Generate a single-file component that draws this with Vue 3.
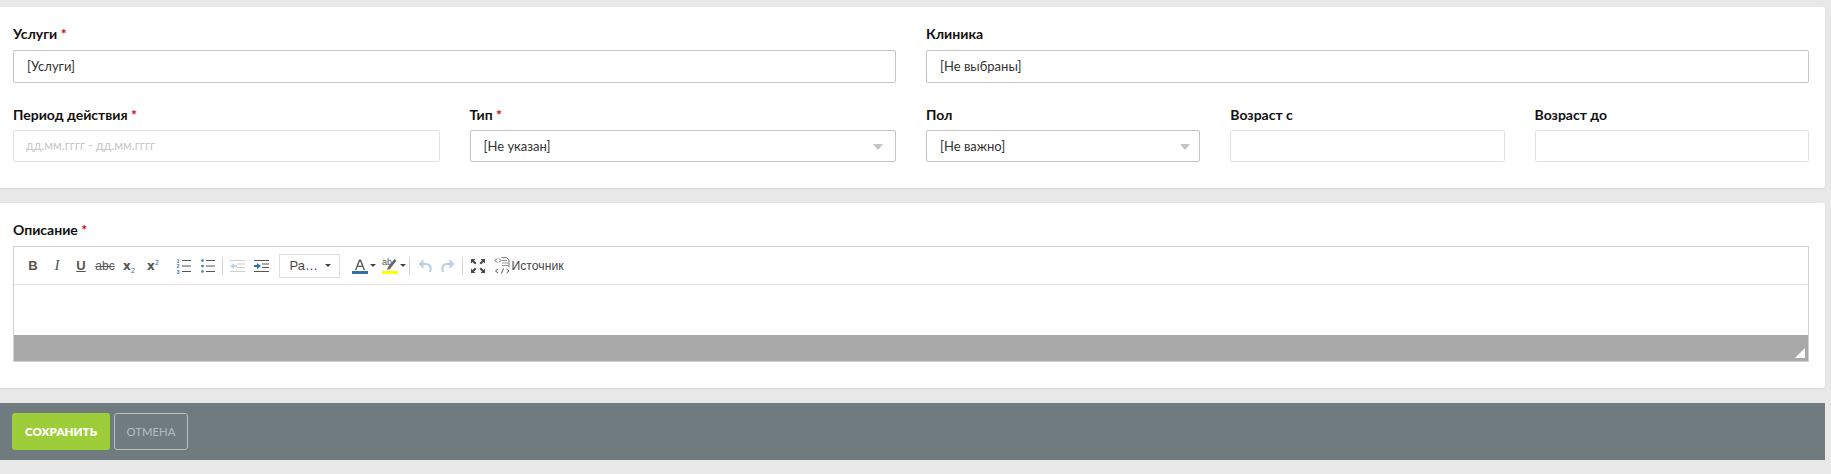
<script setup>
</script>

<template>
  <div class="page">
    <section class="card card-top">
      <div class="row">
        <div class="field half">
          <label class="label">Услуги <i>*</i></label>
          <div class="input strong">[Услуги]</div>
        </div>
        <div class="field half">
          <label class="label">Клиника</label>
          <div class="input strong">[Не выбраны]</div>
        </div>
      </div>
      <div class="row row-2">
        <div class="field quarter">
          <label class="label">Период действия <i>*</i></label>
          <div class="input light placeholder">дд.мм.гггг - дд.мм.гггг</div>
        </div>
        <div class="field quarter">
          <label class="label">Тип <i>*</i></label>
          <div class="input strong select">[Не указан]<span class="caret caret-type"></span></div>
        </div>
        <div class="field sixth">
          <label class="label">Пол</label>
          <div class="input strong select">[Не важно]<span class="caret"></span></div>
        </div>
        <div class="field sixth">
          <label class="label">Возраст с</label>
          <div class="input light"></div>
        </div>
        <div class="field sixth">
          <label class="label">Возраст до</label>
          <div class="input light"></div>
        </div>
      </div>
    </section>

    <section class="card card-editor">
      <label class="label label-editor">Описание <i>*</i></label>
      <div class="editor">
        <div class="toolbar">
          <span class="tb glyph bold"><span>B</span></span>
          <span class="tb glyph ital"><span>I</span></span>
          <span class="tb glyph under"><span>U</span></span>
          <span class="tb glyph strike"><span>abc</span></span>
          <span class="tb glyph bold script"><span>x<sub>2</sub></span></span>
          <span class="tb glyph bold script"><span>x<sup>2</sup></span></span>

          <span class="tb tb-gap">
            <svg width="16" height="16" viewBox="0 0 16 16">
              <g class="num"><text x="0.500" y="4.500">1</text><text x="0.500" y="10">2</text><text x="0.500" y="15.500">3</text></g>
              <g fill="#555"><rect x="6" y="2" width="9" height="1"/><rect x="6" y="7.500" width="9" height="1"/><rect x="6" y="13" width="9" height="1"/></g>
            </svg>
          </span>
          <span class="tb">
            <svg width="16" height="16" viewBox="0 0 16 16">
              <g fill="#3a75ad"><circle cx="2.500" cy="2.500" r="1.300"/><circle cx="2.500" cy="8" r="1.300"/><circle cx="2.500" cy="13.500" r="1.300"/></g>
              <g fill="#555"><rect x="6" y="2" width="9" height="1"/><rect x="6" y="7.500" width="9" height="1"/><rect x="6" y="13" width="9" height="1"/></g>
            </svg>
          </span>
          <span class="sep"></span>
          <span class="tb">
            <svg width="16" height="16" viewBox="0 0 16 16">
              <g fill="#cfcfcf"><rect x="1" y="2" width="15" height="1"/><rect x="8" y="5.500" width="8" height="1"/><rect x="8" y="9" width="8" height="1"/><rect x="1" y="13" width="15" height="1"/></g>
              <path d="M8 7H5V5L1 8l4 3V9h3z" fill="#bcd3e8"/>
            </svg>
          </span>
          <span class="tb">
            <svg width="16" height="16" viewBox="0 0 16 16">
              <g fill="#555"><rect x="1" y="2" width="15" height="1"/><rect x="9" y="5.500" width="7" height="1"/><rect x="9" y="9" width="7" height="1"/><rect x="1" y="13" width="15" height="1"/></g>
              <path d="M1 7h3V5l4 3-4 3V9H1z" fill="#2f6da8"/>
            </svg>
          </span>

          <div class="combo"><span class="combo-text">Ра…</span><span class="mini"></span></div>

          <span class="tb tb-wide">
            <svg width="16" height="16" viewBox="0 0 16 16">
              <path d="M3 12L7 1.500h2L13 12h-1.500l-1-3h-5l-1 3zM6 7.800h4L8 3z" fill="#555"/>
              <rect x="0" y="13" width="16" height="3" fill="#3a6ea5"/>
            </svg>
            <span class="mini"></span>
          </span>
          <span class="tb tb-wide">
            <svg width="16" height="16" viewBox="0 0 16 16">
              <text x="0" y="7" class="ab">ab</text>
              <path d="M5 12l1-3 6.500-8 2 1.600L8 11z" fill="#666"/>
              <rect x="0" y="13" width="16" height="3" fill="#ffff00"/>
            </svg>
            <span class="mini"></span>
          </span>
          <span class="sep sep-2"></span>
          <span class="tb undo undo-first">
            <svg width="16" height="16" viewBox="0 0 16 16">
              <path d="M13 14c1.500-3.500 1-8-4.500-8H5" fill="none" stroke="#bcd0e2" stroke-width="2.200"/>
              <path d="M6.500 1L1.500 6l5 5z" fill="#bcd0e2"/>
            </svg>
          </span>
          <span class="tb undo">
            <svg width="16" height="16" viewBox="0 0 16 16">
              <path d="M3 14c-1.500-3.500-1-8 4.500-8H11" fill="none" stroke="#bcd0e2" stroke-width="2.200"/>
              <path d="M9.500 1l5 5-5 5z" fill="#bcd0e2"/>
            </svg>
          </span>
          <span class="sep sep-3"></span>
          <span class="tb">
            <svg width="16" height="16" viewBox="0 0 16 16">
              <g fill="#4a4a4a">
                <path d="M1 1h4.500L4 2.500 6.500 5 5 6.500 2.500 4 1 5.500z"/>
                <path d="M15 1v4.500L13.500 4 11 6.500 9.500 5 12 2.500 10.500 1z"/>
                <path d="M1 15v-4.500L2.500 12 5 9.500 6.500 11 4 13.500 5.500 15z"/>
                <path d="M15 15h-4.500l1.500-1.500L9.500 11 11 9.500l2.500 2.500 1.500-1.500z"/>
              </g>
            </svg>
          </span>
          <span class="source">
            <svg width="17" height="17" viewBox="0 0 17 17">
              <path d="M7.500 .5h5l2.500 2.500v7.500" fill="none" stroke="#777"/>
              <path d="M8 3.500h5M8 6h6.500M8 8.500h6.500" stroke="#999" fill="none"/>
              <path d="M3 1.500L1 3.500l2 2M5 1.500l2 2-2 2M4 12l-2.500 2L4 16M12.500 12l2.500 2-2.500 2M9.500 11.500L7.500 16.500" stroke="#555" fill="none"/>
            </svg>
            <span class="source-text">Источник</span>
          </span>
        </div>
        <div class="edit-area"></div>
        <div class="status"><span class="grip"></span></div>
      </div>
    </section>

    <footer class="actions">
      <button class="btn save">СОХРАНИТЬ</button>
      <button class="btn cancel">ОТМЕНА</button>
    </footer>
  </div>
</template>

<style>
html, body { margin: 0; background: #e8e8e8; }
</style>

<style scoped>
.page {
  width: 1825px;
  height: 474px;
  padding-top: 7px;
  box-sizing: border-box;
  font-family: "Open Sans", "Liberation Sans", sans-serif;
  color: #333;
}
.card {
  background: #fff;
  border-radius: 0 3px 3px 0;
  box-shadow: 0 1px 2px rgba(0,0,0,.08);
  box-sizing: border-box;
}
.card-top { height: 181px; padding: 19px 16px 0 13px; margin-bottom: 15px; }
.card-editor { height: 185px; padding: 17px 16px 0 13px; margin-bottom: 15px; }
.row { display: flex; gap: 30px; }
.row-2 { margin-top: 23px; }
.half { flex: 0 0 883px; }
.quarter { flex: 0 0 426.5px; }
.sixth { flex: 0 0 274.3px; }
.label {
  display: block;
  height: 24px;
  line-height: 16px;
  font-family: Lato, "Open Sans", sans-serif;
  font-size: 14px;
  font-weight: 700;
  color: #111;
}
.row-2 .label { line-height: 18px; }
.label-editor { height: 26px; line-height: 20px; }
.label i { color: #d0021b; font-style: normal; }
.input {
  box-sizing: border-box;
  height: 33px;
  line-height: 31px;
  padding: 0 13px;
  font-family: Lato, "Open Sans", sans-serif;
  font-size: 13px;
  color: #333;
  background: #fff;
  border-radius: 2px;
  position: relative;
}
.strong { border: 1px solid #c4c4c4; }
.light { border: 1px solid #e2e2e2; height: 32px; line-height: 30px; }
.row-2 .strong { height: 32px; line-height: 30px; }
.placeholder { color: #c8c8c8; font-size: 12.400px; padding-left: 12px; }
.caret {
  position: absolute;
  right: 9px;
  top: 13px;
  border-left: 5.500px solid transparent;
  border-right: 5.500px solid transparent;
  border-top: 6px solid #c4c4c4;
}
.caret-type { right: 12px; }
.editor { border: 1px solid #d1d1d1; box-sizing: border-box; height: 116px; display: flex; flex-direction: column; }
.toolbar {
  height: 38px;
  flex: none;
  display: flex;
  align-items: center;
  border-bottom: 1px solid #e2e2e2;
  box-sizing: border-box;
  padding-left: 7px;
  background: #fff;
}
.edit-area { height: 50px; flex: none; background: #fff; }
.status { flex: 1; background: #a9a9a9; position: relative; }
.grip {
  position: absolute;
  right: 3px;
  bottom: 3px;
  width: 0;
  height: 0;
  border-left: 10px solid transparent;
  border-bottom: 10px solid #fff;
}
.tb {
  flex: none;
  width: 24px;
  height: 20px;
  display: flex;
  align-items: center;
  justify-content: center;
}
.tb-gap { margin-left: 6.500px; }
.glyph { font-family: "Liberation Sans", sans-serif; font-size: 13px; color: #555; }
.bold { font-weight: 700; }
.ital { font-family: "Liberation Serif", serif; font-style: italic; font-size: 15px; }
.under { text-decoration: underline; font-weight: 700; }
.strike { text-decoration: line-through; font-size: 12px; }
.script { font-family: "DejaVu Sans", sans-serif; font-size: 12px; }
.script sub, .script sup { font-size: 7px; color: #3a75ad; font-weight: 400; line-height: 0; }
.num text { font-family: "Liberation Sans", sans-serif; font-size: 5.500px; font-weight: 700; fill: #3a75ad; }
.sep { flex: none; width: 1px; height: 18px; background: #d4d4d4; margin: 0 2px 0 2px; }
.combo {
  flex: none;
  box-sizing: border-box;
  width: 61px;
  height: 24px;
  margin: 0 9px 0 6px;
  border: 1px solid #dedede;
  display: flex;
  align-items: center;
  padding-left: 10px;
  position: relative;
  font-family: "Liberation Sans", sans-serif;
  font-size: 13px;
  color: #484848;
}
.combo .mini { position: absolute; right: 8px; top: 9px; }
.mini {
  display: inline-block;
  width: 0;
  height: 0;
  border-left: 3px solid transparent;
  border-right: 3px solid transparent;
  border-top: 3px solid #444;
}
.tb-wide { width: 30px; gap: 2px; }
.ab { font-family: "Liberation Sans", sans-serif; font-size: 9px; fill: #555; }
.sep-2 { margin-left: 0; margin-right: 3px; }
.sep-3 { margin-left: 2px; margin-right: 3px; }
.undo { width: 23px; }
.undo-first { width: 24px; }
.source { display: flex; align-items: center; gap: 1px; margin-left: 4px; }
.source-text { font-family: "Liberation Sans", sans-serif; font-size: 12.200px; color: #474747; }
.actions {
  height: 57px;
  background: #6f7b7f;
  display: flex;
  align-items: center;
  gap: 4px;
  padding-left: 12px;
}
.btn {
  box-sizing: border-box;
  height: 37px;
  border-radius: 3px;
  font-family: Lato, "Open Sans", sans-serif;
  padding: 0;
}
.save { width: 98px; background: #9dce3a; border: none; color: #fff; font-weight: 800; font-size: 11.600px; }
.cancel { width: 74px; background: transparent; border: 1px solid #b5bfc3; color: #b0babd; font-weight: 500; font-size: 11.300px; }
</style>
